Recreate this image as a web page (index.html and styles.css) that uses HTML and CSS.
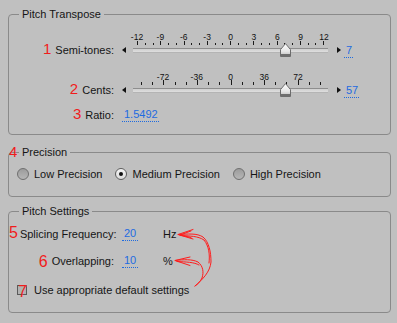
FILE: index.html
```html
<!DOCTYPE html>
<html>
<head>
<meta charset="utf-8">
<link rel="stylesheet" href="styles.css">
</head>
<body>
<div class="page">
  <fieldset class="grp g1">
    <legend>Pitch Transpose</legend>
    <div class="srow">
      <div class="scale">
        <div class="nums"><span>-12</span><span>-9</span><span>-6</span><span>-3</span><span>0</span><span>3</span><span>6</span><span>9</span><span>12</span></div>
        <div class="ticks"><i class="M"></i><i></i><i></i><i class="M"></i><i></i><i></i><i class="M"></i><i></i><i></i><i class="M"></i><i></i><i></i><i class="M"></i><i></i><i></i><i class="M"></i><i></i><i></i><i class="M"></i><i></i><i></i><i class="M"></i><i></i><i></i><i class="M"></i></div>
      </div>
      <div class="lbl"><span class="ann">1</span>Semi-tones:</div>
      <div class="arr-l"></div>
      <div class="trk">
        <div class="bar"></div>
        <svg class="thumb" style="left:152.5px" viewBox="0 0 11 14" width="11" height="14"><defs><linearGradient id="tg1" x1="0" y1="0" x2="0" y2="1"><stop offset="0" stop-color="#ffffff"/><stop offset="0.6" stop-color="#e6e6e6"/><stop offset="1" stop-color="#b8b8b8"/></linearGradient></defs><path d="M5.5 0.6 L10.5 6.6 V13.5 H0.5 V6.6 Z" fill="url(#tg1)" stroke="#6c6c6c"/><rect x="1" y="11" width="9" height="2.5" fill="#6e6e6e"/></svg>
      </div>
      <div class="arr-r"></div>
      <div class="val">7</div>
    </div>
    <div class="srow r2">
      <div class="scale">
        <div class="nums cents"><span>-72</span><span>-36</span><span>0</span><span>36</span><span>72</span></div>
        <div class="ticks cents"><i></i><i></i><i class="M"></i><i></i><i></i><i class="M"></i><i></i><i></i><i class="M"></i><i></i><i></i><i class="M"></i><i></i><i></i><i class="M"></i><i></i><i></i></div>
      </div>
      <div class="lbl"><span class="ann">2</span>Cents:</div>
      <div class="arr-l"></div>
      <div class="trk">
        <div class="bar"></div>
        <svg class="thumb" style="left:152.5px" viewBox="0 0 11 14" width="11" height="14"><defs><linearGradient id="tg2" x1="0" y1="0" x2="0" y2="1"><stop offset="0" stop-color="#ffffff"/><stop offset="0.6" stop-color="#e6e6e6"/><stop offset="1" stop-color="#b8b8b8"/></linearGradient></defs><path d="M5.5 0.6 L10.5 6.6 V13.5 H0.5 V6.6 Z" fill="url(#tg2)" stroke="#6c6c6c"/><rect x="1" y="11" width="9" height="2.5" fill="#6e6e6e"/></svg>
      </div>
      <div class="arr-r"></div>
      <div class="val">57</div>
    </div>
    <div class="rrow">
      <div class="lbl"><span class="ann">3</span>Ratio:</div>
      <span class="pval wide">1.5492</span>
    </div>
  </fieldset>

  <fieldset class="grp g2">
    <legend class="leg"><span class="ann leg-ann">4</span>Precision</legend>
    <div class="radios">
      <label class="opt"><span class="radio"></span>Low Precision</label>
      <label class="opt"><span class="radio on"></span>Medium Precision</label>
      <label class="opt"><span class="radio"></span>High Precision</label>
    </div>
  </fieldset>

  <fieldset class="grp g3">
    <legend>Pitch Settings</legend>
    <div class="prow">
      <div class="lbl"><span class="ann big">5</span>Splicing Frequency:</div>
      <span class="pval">20</span>
      <span class="unit">Hz</span>
    </div>
    <div class="prow p2">
      <div class="lbl"><span class="ann big low">6</span>Overlapping:</div>
      <span class="pval">10</span>
      <span class="unit">%</span>
    </div>
    <div class="crow">
      <span class="cb"><span class="ann big cb-ann">7</span></span>
      <span>Use appropriate default settings</span>
    </div>
  </fieldset>

  <svg class="marks" width="397" height="323" viewBox="0 0 397 323">
    <g fill="none" stroke="#ff1c1c" stroke-width="1" stroke-linecap="round">
      <path d="M178 234.5 C188 234 197 233 203 237 C209 242 211 252 211 262 C210 272 203 279 195 286"/>
      <path d="M180 235.5 C190 236 198 236 204 240 C209 246 210 255 209 263"/>
      <path d="M193 229.5 L178 234.5 L193 239"/>
      <path d="M191 231 L180 235 L191 237.5"/>
      <path d="M175 260.5 C184 259.5 192 259 198 262 C203 266 204 272 202 278 C200 282 198 284 195 286"/>
      <path d="M177 261.5 C186 262 194 262 199 265"/>
      <path d="M190 257 L175 260.5 L190 265.5"/>
    </g>
  </svg>
</div>
</body>
</html>
```

FILE: styles.css
```css
body {
  margin: 0;
  background: #c0c0c0;
  font-family: "Liberation Sans", Arial, sans-serif;
  font-size: 11px;
  color: #151515;
}

.page {
  position: relative;
  width: 397px;
  height: 323px;
  padding: 8px 6px 0 8px;
  box-sizing: border-box;
  overflow: hidden;
}

.grp {
  margin: 0;
  width: 383px;
  min-width: 0;
  box-sizing: border-box;
  border: 1px solid #8a8a8a;
  border-radius: 4px;
}

.grp legend {
  margin-left: 10px;
  padding: 0 3px;
  line-height: 12px;
}

.g1 { padding: 13px 0 12px 0; }
.g2 { margin-top: 11px; padding: 9px 0 15px 0; }
.g3 { margin-top: 8px; padding: 10px 0 15px 0; }

.ann {
  color: #f01c1c;
  font-size: 15px;
  line-height: 0;
  margin-right: 4px;
}
.ann.big { font-size: 16px; margin-right: 2px; }
.ann.low { position: relative; top: 2px; margin-right: 4px; }

/* slider rows */
.srow {
  display: grid;
  grid-template-columns: 105px 13px 207px 10px auto;
  grid-template-rows: 12px 10px;
}
.r2 { margin-top: 18px; }

.scale { grid-column: 3; grid-row: 1; }

.nums {
  display: flex;
  justify-content: space-between;
  height: 8px;
  line-height: 8px;
  font-size: 8.5px;
  color: #111;
}
.nums span { width: 20px; text-align: center; }
.nums.cents { margin-left: 26px; width: 155px; }

.ticks {
  display: flex;
  justify-content: space-between;
  align-items: flex-end;
  height: 4px;
  margin: 0 10px;
}
.ticks i { display: block; width: 1px; height: 2px; background: #1a1a1a; }
.ticks i.M { height: 4px; }
.ticks.cents { margin: 0 13px 0 14px; }
.ticks.cents i { height: 3px; }
.ticks.cents i.M { height: 5px; }

.srow .lbl {
  grid-column: 1;
  grid-row: 2;
  text-align: right;
  line-height: 10px;
  white-space: nowrap;
}

.arr-l {
  grid-column: 2;
  grid-row: 2;
  align-self: center;
  margin-left: 8px;
  width: 0;
  height: 0;
  border-top: 3px solid transparent;
  border-bottom: 3px solid transparent;
  border-right: 4px solid #111;
}

.arr-r {
  grid-column: 4;
  grid-row: 2;
  align-self: center;
  margin-left: 3px;
  width: 0;
  height: 0;
  border-top: 3.5px solid transparent;
  border-bottom: 3.5px solid transparent;
  border-left: 4px solid #111;
}

.trk {
  grid-column: 3;
  grid-row: 2;
  position: relative;
}
.bar {
  margin: 3px 6px 0;
  height: 5px;
  box-sizing: border-box;
  border-top: 1px solid #8e8e8e;
  border-bottom: 1px solid #b4b4b4;
  background: linear-gradient(#cfcfcf, #dedede);
}
.thumb {
  position: absolute;
  top: -2px;
  display: block;
}

.val {
  grid-column: 5;
  grid-row: 2;
  justify-self: start;
  align-self: start;
  line-height: 10px;
  padding: 0 1px 2px 2px;
  color: #1e6be0;
  border-bottom: 1px dotted #1e6be0;
}

/* ratio + settings rows */
.rrow, .prow {
  display: flex;
  align-items: center;
  height: 14px;
  line-height: 14px;
}
.rrow { margin-top: 13px; }
.rrow .lbl, .prow .lbl {
  width: 105px;
  text-align: right;
  white-space: nowrap;
}
.pval {
  margin-left: 8px;
  width: 16px;
  padding-left: 2px;
  box-sizing: border-box;
  line-height: 13px;
  color: #1e6be0;
  border-bottom: 1px dotted #1e6be0;
}
.pval.wide { width: auto; padding-right: 1px; }
.unit { margin-left: 25px; }
.p2 { margin-top: 13px; }

/* precision */
.leg { position: relative; }
.leg-ann {
  position: absolute;
  left: -10px;
  top: 6px;
  margin: 0;
}
.radios {
  display: flex;
  align-items: center;
  height: 14px;
  margin-left: 8px;
}
.opt {
  display: flex;
  align-items: center;
  gap: 5px;
  margin-right: 13px;
  line-height: 14px;
}
.radio {
  position: relative;
  width: 12px;
  height: 12px;
  box-sizing: border-box;
  border-radius: 50%;
  border: 1px solid #6f6f6f;
  background: linear-gradient(#9c9c9c, #b6b6b6);
}
.radio.on {
  background: linear-gradient(#f4f4f4, #dcdcdc);
  border-color: #5e5e5e;
}
.radio.on::after {
  content: "";
  position: absolute;
  left: 3px;
  top: 3px;
  width: 4px;
  height: 4px;
  border-radius: 50%;
  background: #111;
}

/* checkbox row */
.crow {
  display: flex;
  align-items: center;
  gap: 7px;
  height: 14px;
  line-height: 14px;
  margin-top: 15px;
  margin-left: 8px;
}
.cb {
  position: relative;
  width: 10px;
  height: 10px;
  box-sizing: border-box;
  border: 1px solid #5a5a5a;
  background: #b2b2b2;
}
.cb-ann {
  position: absolute;
  left: 0;
  top: 5.5px;
  margin: 0;
}

.marks {
  position: absolute;
  left: 0;
  top: 0;
  pointer-events: none;
}
```
